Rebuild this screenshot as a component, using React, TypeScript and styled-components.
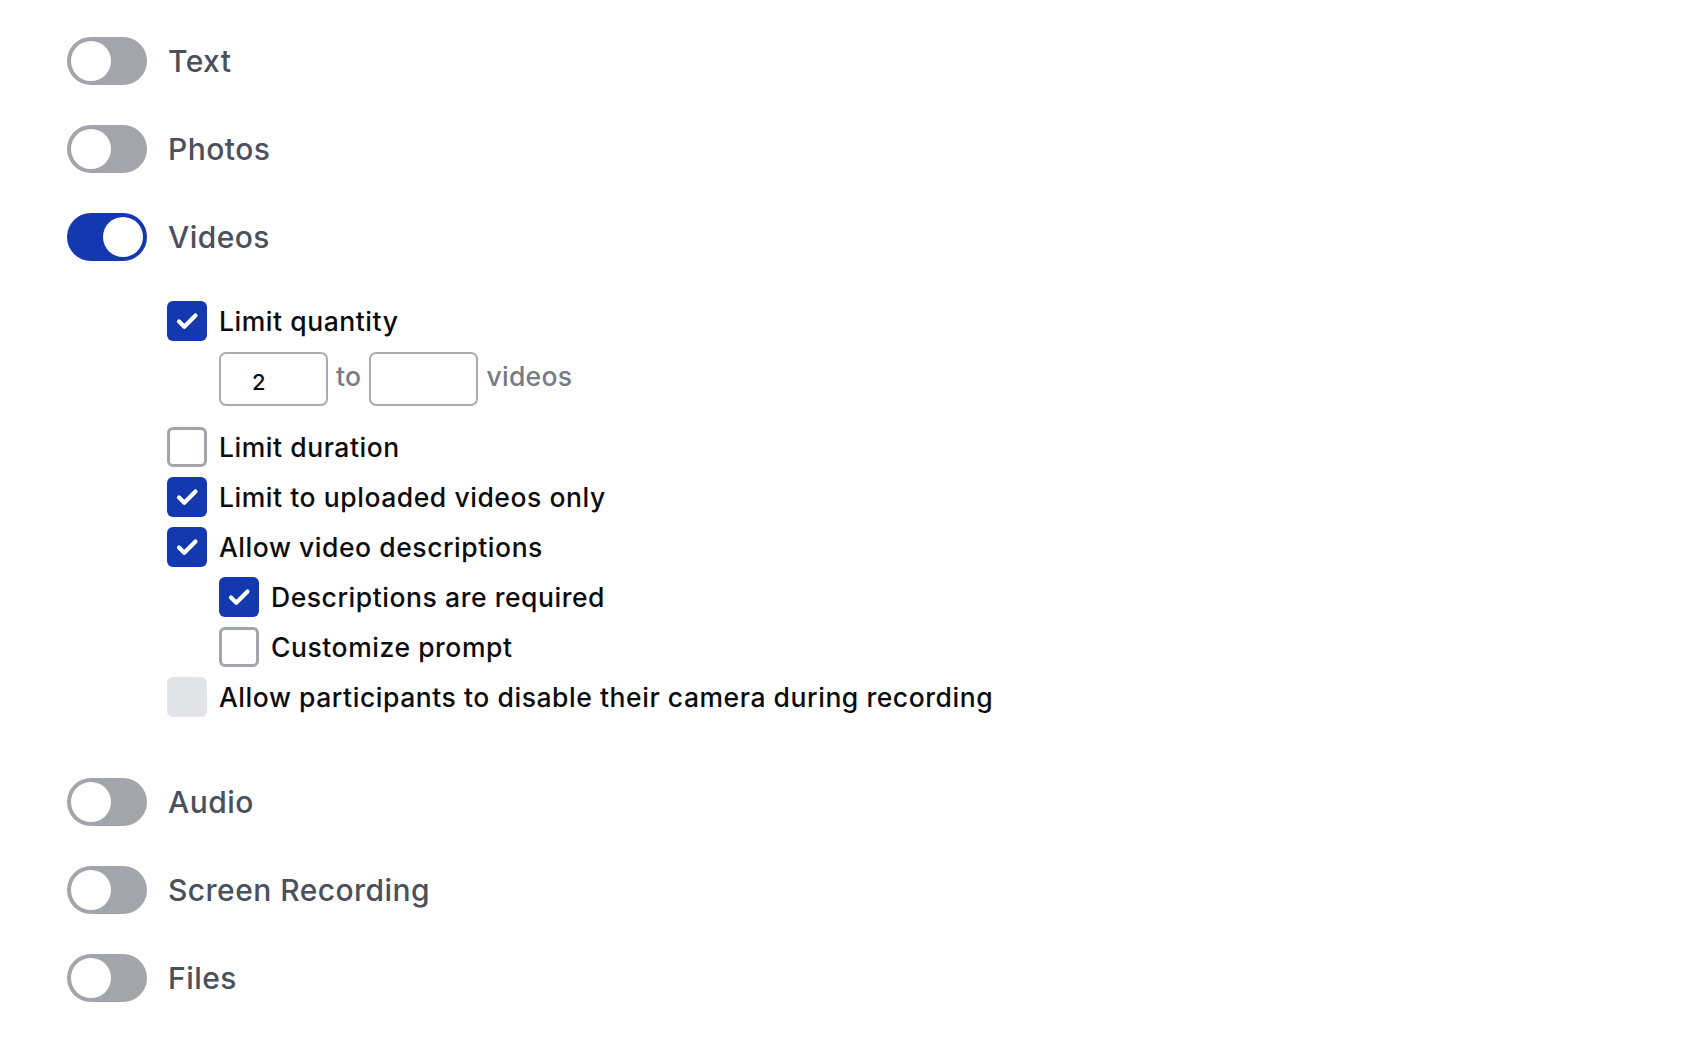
import React from 'react'
import styled, { createGlobalStyle } from 'styled-components'

const GlobalStyle = createGlobalStyle`
  html, body {
    margin: 0;
    padding: 0;
    background: #ffffff;
  }
  body {
    font-family: Inter, "Noto Sans", "Liberation Sans", sans-serif;
    -webkit-font-smoothing: antialiased;
  }
`

const Page = styled.div`
  display: flex;
  flex-direction: column;
  gap: 40px;
  padding: 37px 0 0 67px;
`

const ToggleRow = styled.label`
  display: flex;
  align-items: center;
  gap: 21px;
  height: 48px;
`

const Track = styled.span<{ $on?: boolean }>`
  display: inline-flex;
  align-items: center;
  justify-content: ${p => (p.$on ? 'flex-end' : 'flex-start')};
  box-sizing: border-box;
  width: 80px;
  height: 48px;
  padding: 4px;
  border-radius: 24px;
  background: ${p => (p.$on ? '#1438b0' : '#a3a5ab')};
`

const Knob = styled.span`
  display: block;
  width: 40px;
  height: 40px;
  border-radius: 50%;
  background: #ffffff;
`

const ToggleLabel = styled.span`
  font-size: 30px;
  font-weight: 500;
  color: #4a505c;
  letter-spacing: 0.45px;
`

const SubSection = styled.div`
  display: flex;
  flex-direction: column;
  gap: 10px;
  margin-left: 100px;
  margin-bottom: 21px;
`

const Nested = styled.div`
  display: flex;
  flex-direction: column;
  gap: 10px;
  margin-left: 52px;
`

const CheckRow = styled.label`
  display: flex;
  align-items: center;
  gap: 12px;
  height: 40px;
`

const Box = styled.span<{ $state: 'on' | 'off' | 'disabled' }>`
  display: inline-flex;
  align-items: center;
  justify-content: center;
  box-sizing: border-box;
  width: 40px;
  height: 40px;
  flex-shrink: 0;
  border-radius: 6px;
  background: ${p =>
    p.$state === 'on' ? '#1438b0' : p.$state === 'disabled' ? '#e3e4e8' : '#ffffff'};
  border: ${p => (p.$state === 'off' ? '3px solid #a3a5ab' : 'none')};
`

const CheckLabel = styled.span`
  font-size: 26.5px;
  font-weight: 500;
  color: #0c0c0e;
  letter-spacing: 0.55px;
`

const RangeRow = styled.div`
  display: flex;
  align-items: center;
  gap: 8px;
  margin-left: 52px;
  margin-top: 11px;
  margin-bottom: 11px;
`

const NumberBox = styled.input`
  box-sizing: border-box;
  width: 109px;
  height: 54px;
  padding: 6px 0 0 31px;
  border: 2px solid #a9abb0;
  border-radius: 7px;
  font-family: inherit;
  font-size: 22px;
  font-weight: 500;
  color: #0c0c0e;
  outline: none;
  background: #fff;
`

const RangeWord = styled.span`
  font-size: 26.5px;
  font-weight: 500;
  color: #767b86;
  margin-top: -6px;
  letter-spacing: 0.3px;
`

const Check = () => (
  <svg width="28" height="28" viewBox="0 0 28 28" fill="none">
    <path d="M6 14.5l5.3 5.3L22.5 8.5" stroke="#fff" strokeWidth="4.2" strokeLinecap="round" strokeLinejoin="round" />
  </svg>
)

const Toggle: React.FC<{ on?: boolean; label: string }> = ({ on, label }) => (
  <ToggleRow>
    <Track $on={on}>
      <Knob />
    </Track>
    <ToggleLabel>{label}</ToggleLabel>
  </ToggleRow>
)

const CheckItem: React.FC<{ state: 'on' | 'off' | 'disabled'; label: string }> = ({ state, label }) => (
  <CheckRow>
    <Box $state={state}>{state === 'on' && <Check />}</Box>
    <CheckLabel>{label}</CheckLabel>
  </CheckRow>
)

const App: React.FC = () => (
  <>
    <GlobalStyle />
    <Page>
      <Toggle label="Text" />
      <Toggle label="Photos" />
      <Toggle on label="Videos" />
      <SubSection>
        <div>
          <CheckItem state="on" label="Limit quantity" />
          <RangeRow>
            <NumberBox defaultValue="2" />
            <RangeWord>to</RangeWord>
            <NumberBox defaultValue="" />
            <RangeWord>videos</RangeWord>
          </RangeRow>
        </div>
        <CheckItem state="off" label="Limit duration" />
        <CheckItem state="on" label="Limit to uploaded videos only" />
        <CheckItem state="on" label="Allow video descriptions" />
        <Nested>
          <CheckItem state="on" label="Descriptions are required" />
          <CheckItem state="off" label="Customize prompt" />
        </Nested>
        <CheckItem state="disabled" label="Allow participants to disable their camera during recording" />
      </SubSection>
      <Toggle label="Audio" />
      <Toggle label="Screen Recording" />
      <Toggle label="Files" />
    </Page>
  </>
)

export default App
